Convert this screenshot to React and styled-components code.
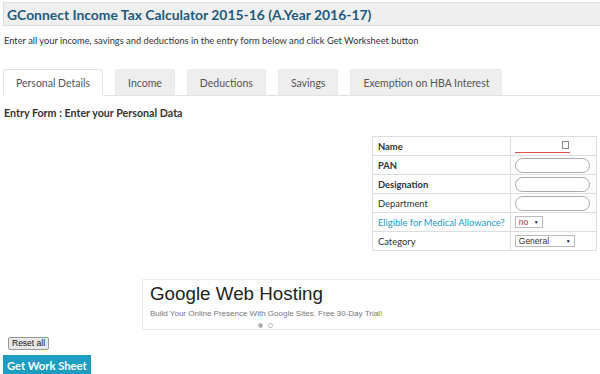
import React from 'react'
import styled, { createGlobalStyle } from 'styled-components'

const Global = createGlobalStyle`
  body {
    margin: 0;
    background: #fff;
    font-family: Lato, "Open Sans", sans-serif;
    color: #333;
  }
`

const Page = styled.div`
  width: 600px;
  height: 374px;
  overflow: hidden;
`

const TitleBar = styled.div`
  margin: 2px 0 0 3px;
  height: 22px;
  background: #efefef;
  border: 1px solid #dcdcdc;
  border-right: 0;
  display: flex;
  align-items: center;
  padding-left: 3px;
`

const Title = styled.h1`
  margin: 0;
  font-size: 13.9px;
  font-weight: 700;
  color: #1e5a7b;
`

const Intro = styled.p`
  margin: 9px 0 0 4px;
  font-size: 9.3px;
  color: #333;
`

const Tabs = styled.div`
  display: flex;
  gap: 12px;
  margin: 23px 0 0 3px;
  border-bottom: 1px solid #e2e2e2;
  height: 26px;
`

const Tab = styled.div`
  height: 27px;
  box-sizing: border-box;
  padding: 0 12px;
  display: flex;
  align-items: center;
  font-size: 10.5px;
  color: #555;
  background: ${p => (p.$active ? '#fff' : '#eee')};
  border: 1px solid ${p => (p.$active ? '#e2e2e2' : '#e8e8e8')};
  border-bottom-color: ${p => (p.$active ? '#fff' : '#e2e2e2')};
  border-radius: 3px 3px 0 0;
`

const FormTitle = styled.h2`
  margin: 10px 0 0 4px;
  font-size: 10.7px;
  font-weight: 700;
  color: #333;
`

const TableWrap = styled.div`
  display: flex;
  justify-content: flex-end;
  padding-right: 3px;
  margin-top: 17px;
`

const Table = styled.table`
  border-collapse: collapse;
  width: 225px;
  border: 1px solid #ddd;
`

const Label = styled.td`
  border: 1px solid #ddd;
  width: 126px;
  height: 18px;
  padding: 0 5px;
  font-size: 9.4px;
  font-weight: ${p => (p.$bold ? 700 : 400)};
  color: ${p => (p.$link ? '#1b9bc8' : '#333')};
  white-space: nowrap;
`

const Cell = styled.td`
  border: 1px solid #ddd;
  padding: 0 4px;
  height: 18px;
`

const RoundInput = styled.div`
  width: 75px;
  height: 15px;
  border: 1px solid #aaa;
  border-radius: 8px;
  box-sizing: border-box;
`

const LineInput = styled.div`
  width: 55px;
  height: 13px;
  box-sizing: border-box;
  border-bottom: 1px solid #e0544c;
  display: flex;
  justify-content: flex-end;
  align-items: center;
`

const FieldIcon = styled.span`
  width: 5px;
  height: 6px;
  border: 1px solid #888;
  margin-right: 1px;
  margin-top: -2px;
`

const Select = styled.div`
  width: ${p => p.$w}px;
  height: 12px;
  box-sizing: border-box;
  border: 1px solid #bbb;
  background: #fff;
  font-family: "Liberation Sans", Arial, sans-serif;
  font-size: 8.5px;
  color: #333;
  display: flex;
  align-items: center;
  justify-content: space-between;
  padding: 0 3px;
`

const Caret = styled.span`
  font-size: 5px;
  color: #222;
`

const Ad = styled.div`
  margin: 28px 0 0 142px;
  height: 51px;
  border: 1px solid #ececec;
  border-right: 0;
  box-sizing: border-box;
  padding: 3px 0 0 7px;
  font-family: "Liberation Sans", Arial, sans-serif;
`

const AdTitle = styled.div`
  font-size: 18.8px;
  color: #222;
  line-height: 22px;
`

const AdText = styled.div`
  font-size: 8px;
  color: #777;
  margin-top: 4px;
`

const Dots = styled.div`
  display: flex;
  gap: 5px;
  margin: 5px 0 0 108px;
`

const Dot = styled.span`
  width: 5px;
  height: 5px;
  border-radius: 50%;
  box-sizing: border-box;
  background: ${p => (p.$on ? '#aaa' : '#fff')};
  border: 1px solid #bbb;
`

const ResetButton = styled.button`
  display: block;
  margin: 7px 0 0 8px;
  height: 13px;
  padding: 0 3px;
  font-family: "Liberation Sans", Arial, sans-serif;
  font-size: 8.5px;
  line-height: 11px;
  color: #111;
  background: #e8e8e8;
  border: 1px solid #999;
  border-radius: 2px;
`

const SheetButton = styled.button`
  display: block;
  margin: 5px 0 0 3px;
  height: 20px;
  padding: 0 4px;
  font-family: Lato, sans-serif;
  font-size: 11.2px;
  font-weight: 700;
  color: #fff;
  background: #1d9dc2;
  border: 0;
`

const tabs = ['Personal Details', 'Income', 'Deductions', 'Savings', 'Exemption on HBA Interest']

export default function App() {
  return (
    <Page>
      <Global />
      <TitleBar>
        <Title>GConnect Income Tax Calculator 2015-16 (A.Year 2016-17)</Title>
      </TitleBar>
      <Intro>Enter all your income, savings and deductions in the entry form below and click Get Worksheet button</Intro>
      <Tabs>
        {tabs.map((t, i) => (
          <Tab key={t} $active={i === 0}>{t}</Tab>
        ))}
      </Tabs>
      <FormTitle>Entry Form : Enter your Personal Data</FormTitle>
      <TableWrap>
        <Table>
          <tbody>
            <tr>
              <Label $bold>Name</Label>
              <Cell><LineInput><FieldIcon /></LineInput></Cell>
            </tr>
            <tr>
              <Label $bold>PAN</Label>
              <Cell><RoundInput /></Cell>
            </tr>
            <tr>
              <Label $bold>Designation</Label>
              <Cell><RoundInput /></Cell>
            </tr>
            <tr>
              <Label>Department</Label>
              <Cell><RoundInput /></Cell>
            </tr>
            <tr>
              <Label $link>Eligible for Medical Allowance?</Label>
              <Cell><Select $w={28}><span style={{ color: '#a33' }}>no</span><Caret>▼</Caret></Select></Cell>
            </tr>
            <tr>
              <Label>Category</Label>
              <Cell><Select $w={60}>General<Caret>▼</Caret></Select></Cell>
            </tr>
          </tbody>
        </Table>
      </TableWrap>
      <Ad>
        <AdTitle>Google Web Hosting</AdTitle>
        <AdText>Build Your Online Presence With Google Sites. Free 30-Day Trial!</AdText>
        <Dots><Dot $on /><Dot /></Dots>
      </Ad>
      <ResetButton>Reset all</ResetButton>
      <SheetButton>Get Work Sheet</SheetButton>
    </Page>
  )
}
